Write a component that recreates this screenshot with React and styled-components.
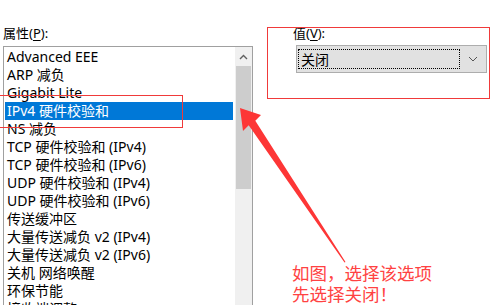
import React from 'react'
import styled, { createGlobalStyle } from 'styled-components'

const GlobalStyle = createGlobalStyle`
    html, body {
        margin: 0;
        padding: 0;
        background: #ffffff;
    }
    body {
        font-family: "Noto Sans", "Noto Sans CJK SC", sans-serif;
        color: #000000;
    }
`

const items = [
    'Advanced EEE',
    'ARP 减负',
    'Gigabit Lite',
    'IPv4 硬件校验和',
    'NS 减负',
    'TCP 硬件校验和 (IPv4)',
    'TCP 硬件校验和 (IPv6)',
    'UDP 硬件校验和 (IPv4)',
    'UDP 硬件校验和 (IPv6)',
    '传送缓冲区',
    '大量传送减负 v2 (IPv4)',
    '大量传送减负 v2 (IPv6)',
    '关机 网络唤醒',
    '环保节能',
    '接收端调整',
]

function App() {
    return (
        <>
            <GlobalStyle />
            <Page>
                <LeftColumn>
                    <FieldLabel>
                        属性(<u>P</u>):
                    </FieldLabel>
                    <ListBox>
                        <ListItems>
                            {items.map((name, i) => (
                                <ListRow key={name} selected={i === 3}>
                                    {name}
                                </ListRow>
                            ))}
                        </ListItems>
                        <ScrollBar>
                            <ScrollButton>
                                <svg width="9" height="6" viewBox="0 0 9 6">
                                    <path d="M1 5 L4.5 1.5 L8 5" fill="none" stroke="#606060" strokeWidth="1.4" />
                                </svg>
                            </ScrollButton>
                            <ScrollThumb />
                        </ScrollBar>
                    </ListBox>
                </LeftColumn>
                <RightColumn>
                    <FieldLabel>
                        值(<u>V</u>):
                    </FieldLabel>
                    <Combo>
                        <ComboValue>关闭</ComboValue>
                        <ComboChevron>
                            <svg width="10" height="6" viewBox="0 0 10 6">
                                <path d="M1 1 L5 5 L9 1" fill="none" stroke="#555" strokeWidth="1" />
                            </svg>
                        </ComboChevron>
                    </Combo>
                </RightColumn>

                <Highlight top={95} left={-3} width={186} height={33} />
                <Highlight top={27} left={267} width={223} height={72} />
                <Pointer width="500" height="305" viewBox="0 0 500 305">
                    <polygon
                        points="240,108 261,115 255.3,120.7 345.5,262 344.5,262.5 248.7,125.3 243,131"
                        fill="#fd3636"
                    />
                </Pointer>
                <Note>
                    如图，选择该选项
                    <br />
                    先选择关闭！
                </Note>
            </Page>
        </>
    )
}

export default App

const Page = styled.div`
    position: relative;
    width: 500px;
    height: 305px;
    overflow: hidden;
    display: flex;
    align-items: flex-start;
`

const LeftColumn = styled.div`
    width: 250px;
    margin-left: 3px;
    padding-top: 24px;
    display: flex;
    flex-direction: column;
    gap: 4px;
`

const RightColumn = styled.div`
    margin-left: 40px;
    padding-top: 24px;
    display: flex;
    flex-direction: column;
    gap: 3px;
`

const FieldLabel = styled.div`
    font-size: 13px;
    line-height: 18px;
    height: 18px;
    white-space: nowrap;
    u {
        text-decoration-thickness: 1px;
        text-underline-offset: 2px;
    }
`

const ListBox = styled.div`
    display: flex;
    height: 300px;
    border: 1px solid #a0a0a0;
    border-bottom: none;
    background: #ffffff;
`

const ListItems = styled.div`
    flex: 1;
    padding: 1px 2px 0 1px;
    overflow: hidden;
`

const ListRow = styled.div`
    height: 18px;
    line-height: 18px;
    font-size: 14px;
    padding-left: 2px;
    white-space: nowrap;
    background: ${p => (p.selected ? '#0078d7' : 'transparent')};
    color: ${p => (p.selected ? '#ffffff' : '#000000')};
`

const ScrollBar = styled.div`
    width: 17px;
    background: #f0f0f0;
    display: flex;
    flex-direction: column;
`

const ScrollButton = styled.div`
    height: 19px;
    display: flex;
    align-items: center;
    justify-content: center;
`

const ScrollThumb = styled.div`
    height: 123px;
    margin: 0 1px;
    background: #cdcdcd;
`

const Combo = styled.div`
    margin-left: 3px;
    width: 187px;
    height: 24px;
    border: 1px solid #adadad;
    background: #e1e1e1;
    display: flex;
    align-items: center;
    padding: 1px;
    box-sizing: content-box;
`

const ComboValue = styled.div`
    width: 162px;
    height: 20px;
    border: 1px dotted #000000;
    font-size: 14px;
    line-height: 20px;
    padding-left: 2px;
    box-sizing: border-box;
    margin-left: 0;
`

const ComboChevron = styled.div`
    flex: 1;
    display: flex;
    justify-content: center;
    align-items: center;
`

const Highlight = styled.div`
    position: absolute;
    top: ${p => p.top}px;
    left: ${p => p.left}px;
    width: ${p => p.width}px;
    height: ${p => p.height}px;
    border: 1.5px solid #f03a3a;
    box-sizing: border-box;
    pointer-events: none;
`

const Pointer = styled.svg`
    position: absolute;
    top: 0;
    left: 0;
    pointer-events: none;
`

const Note = styled.div`
    position: absolute;
    left: 292px;
    top: 262px;
    font-family: "Noto Sans CJK SC", sans-serif;
    font-size: 17.5px;
    line-height: 21px;
    color: #ff4242;
    white-space: nowrap;
`
